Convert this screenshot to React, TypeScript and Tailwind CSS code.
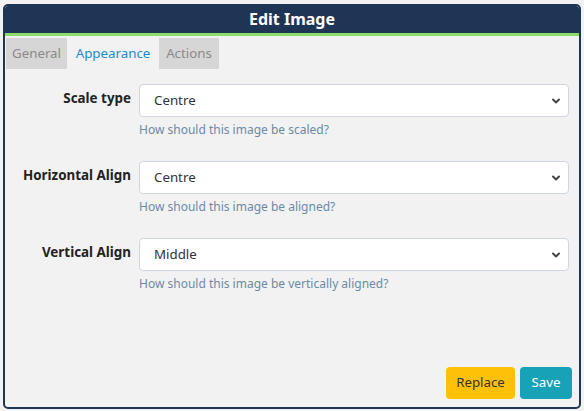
import { ChevronDown } from "lucide-react";

const rows = [
  { label: "Scale type", value: "Centre", help: "How should this image be scaled?" },
  { label: "Horizontal Align", value: "Centre", help: "How should this image be aligned?" },
  { label: "Vertical Align", value: "Middle", help: "How should this image be vertically aligned?" },
];

export default function App() {
  return (
    <div
      className="w-[584px] h-[411px] bg-[#f2f2f2] pt-[4px] pl-[3px] pr-[3px] pb-[2px]"
      style={{ fontFamily: '"Noto Sans", "Open Sans", sans-serif' }}
    >
      <div className="h-full flex flex-col border-2 border-[#1f3556] rounded-[5px] overflow-hidden bg-[#f2f2f2]">
        <div className="h-[27px] bg-[#1f3556] text-white font-bold text-[16px] leading-[27px] text-center">
          Edit Image
        </div>
        <div className="h-[3px] bg-[#8cdd6a]" />
        <div className="flex pl-px pt-[2px] text-[13.3px]">
          <div className="h-[31px] w-[61px] justify-center flex items-center bg-[#d6d6d6] text-[#8a8a8a]">General</div>
          <div className="h-[31px] w-[92px] justify-center flex items-center text-[#1a8bd0]">Appearance</div>
          <div className="h-[31px] w-[60px] justify-center flex items-center bg-[#d6d6d6] text-[#8a8a8a]">Actions</div>
        </div>
        <div className="flex flex-col gap-[22px] pt-[15px] pr-[10px]">
          {rows.map((r) => (
            <div key={r.label} className="flex">
              <div className="w-[126px] text-right font-bold text-[13.4px] text-[#222] pt-[4px] leading-[20px]">
                {r.label}
              </div>
              <div className="ml-[8px] flex-1">
                <div className="h-[33px] bg-white border border-[#cfd6de] rounded-[4px] flex items-center justify-between pl-[14px] pr-[6px] text-[13.3px] text-[#333]">
                  <span>{r.value}</span>
                  <ChevronDown size={12} strokeWidth={4} className="text-[#444]" />
                </div>
                <div className="mt-[4px] text-[12px] text-[#6c8aa6] leading-[18px]">{r.help}</div>
              </div>
            </div>
          ))}
        </div>
        <div className="mt-auto flex justify-end gap-[5px] pr-[7px] pb-[8px] text-[13.3px]">
          <button className="h-[32px] w-[69px] bg-[#ffc107] rounded-[4px] text-[#333]">Replace</button>
          <button className="h-[32px] w-[52px] bg-[#17a2b8] rounded-[4px] text-white">Save</button>
        </div>
      </div>
    </div>
  );
}
